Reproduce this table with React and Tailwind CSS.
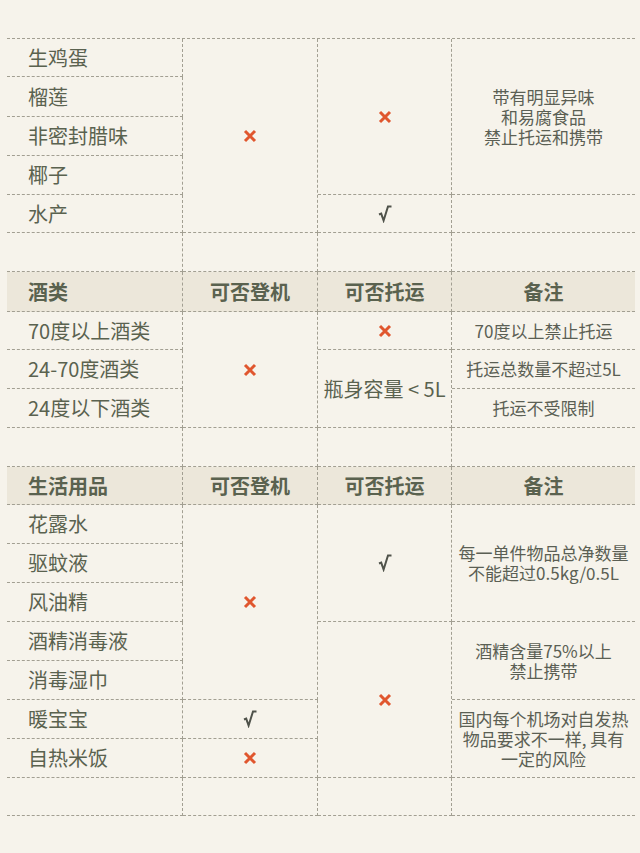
import React from "react";

const L = "border-[#a29f92] border-dashed";

function X() {
  return (
    <svg width="14" height="14" viewBox="0 0 14 14">
      <path d="M2 2 L12 12 M12 2 L2 12" stroke="#e0562e" strokeWidth="3" strokeLinecap="butt" />
    </svg>
  );
}

function Check() {
  return (
    <svg width="14" height="18" viewBox="0 0 14 18">
      <path
        d="M1 9.5 L3.2 8.6 L5.6 15.5 L10 1.5 L13.5 1.5"
        stroke="#4f524a"
        strokeWidth="2"
        fill="none"
        strokeLinejoin="miter"
      />
    </svg>
  );
}

export default function App() {
  const item = `flex items-center pl-[21px] text-[20px] text-[#5a624f] border-b border-r ${L}`;
  const mid = `flex items-center justify-center border-b border-r ${L}`;
  const rem = `flex items-center justify-center text-center text-[17px] leading-[20px] text-[#5b5f54] border-b ${L}`;
  const blankR = `border-b border-r ${L}`;
  const blank = `border-b ${L}`;
  const headL = `flex items-center pl-[21px] text-[20px] font-bold text-[#5a624f] bg-[#ece7da] border-b border-r ${L}`;
  const headC = `flex items-center justify-center text-[20px] font-bold text-[#5a624f] bg-[#ece7da] border-b border-r ${L}`;
  const headE = `flex items-center justify-center text-[20px] font-bold text-[#5a624f] bg-[#ece7da] border-b ${L}`;

  return (
    <div
      className="w-[640px] h-[853px] bg-[#f6f3eb] pt-[38px] overflow-hidden"
      style={{ fontFamily: '"Noto Sans CJK SC", "Noto Sans", sans-serif' }}
    >
      {/* Section 1 */}
      <div className={`ml-[7px] w-[628px] grid grid-cols-[176px_135px_134px_183px] grid-rows-[38px_40px_39px_39px_38px_39px] border-t ${L}`}>
        <div className={`${item} col-start-1 row-start-1`}>生鸡蛋</div>
        <div className={`${item} col-start-1 row-start-2`}>榴莲</div>
        <div className={`${item} col-start-1 row-start-3`}>非密封腊味</div>
        <div className={`${item} col-start-1 row-start-4`}>椰子</div>
        <div className={`${item} col-start-1 row-start-5`}>水产</div>
        <div className={`${blankR} col-start-1 row-start-6`}></div>

        <div className={`${mid} col-start-2 row-start-1 row-span-5`}><X /></div>
        <div className={`${blankR} col-start-2 row-start-6`}></div>

        <div className={`${mid} col-start-3 row-start-1 row-span-4`}><X /></div>
        <div className={`${mid} col-start-3 row-start-5`}><Check /></div>
        <div className={`${blankR} col-start-3 row-start-6`}></div>

        <div className={`${rem} col-start-4 row-start-1 row-span-4`}>
          带有明显异味<br />和易腐食品<br />禁止托运和携带
        </div>
        <div className={`${blank} col-start-4 row-start-5`}></div>
        <div className={`${blank} col-start-4 row-start-6`}></div>
      </div>

      {/* Section 2 */}
      <div className="ml-[7px] w-[628px] grid grid-cols-[176px_135px_134px_183px] grid-rows-[40px_38px_39px_39px_39px]">
        <div className={`${headL} col-start-1 row-start-1`}>酒类</div>
        <div className={`${headC} col-start-2 row-start-1`}>可否登机</div>
        <div className={`${headC} col-start-3 row-start-1`}>可否托运</div>
        <div className={`${headE} col-start-4 row-start-1`}>备注</div>

        <div className={`${item} col-start-1 row-start-2`}>70度以上酒类</div>
        <div className={`${item} col-start-1 row-start-3`}>24-70度酒类</div>
        <div className={`${item} col-start-1 row-start-4`}>24度以下酒类</div>
        <div className={`${blankR} col-start-1 row-start-5`}></div>

        <div className={`${mid} col-start-2 row-start-2 row-span-3`}><X /></div>
        <div className={`${blankR} col-start-2 row-start-5`}></div>

        <div className={`${mid} col-start-3 row-start-2`}><X /></div>
        <div className={`${mid} col-start-3 row-start-3 row-span-2 text-[20px] text-[#5a624f] whitespace-nowrap`}>瓶身容量 &lt; 5L</div>
        <div className={`${blankR} col-start-3 row-start-5`}></div>

        <div className={`${rem} col-start-4 row-start-2`}>70度以上禁止托运</div>
        <div className={`${rem} col-start-4 row-start-3`}>托运总数量不超过5L</div>
        <div className={`${rem} col-start-4 row-start-4`}>托运不受限制</div>
        <div className={`${blank} col-start-4 row-start-5`}></div>
      </div>

      {/* Section 3 */}
      <div className="ml-[7px] w-[628px] grid grid-cols-[176px_135px_134px_183px] grid-rows-[38px_39px_39px_39px_39px_39px_39px_39px_38px]">
        <div className={`${headL} col-start-1 row-start-1`}>生活用品</div>
        <div className={`${headC} col-start-2 row-start-1`}>可否登机</div>
        <div className={`${headC} col-start-3 row-start-1`}>可否托运</div>
        <div className={`${headE} col-start-4 row-start-1`}>备注</div>

        <div className={`${item} col-start-1 row-start-2`}>花露水</div>
        <div className={`${item} col-start-1 row-start-3`}>驱蚊液</div>
        <div className={`${item} col-start-1 row-start-4`}>风油精</div>
        <div className={`${item} col-start-1 row-start-5`}>酒精消毒液</div>
        <div className={`${item} col-start-1 row-start-6`}>消毒湿巾</div>
        <div className={`${item} col-start-1 row-start-7`}>暖宝宝</div>
        <div className={`${item} col-start-1 row-start-8`}>自热米饭</div>
        <div className={`${blankR} col-start-1 row-start-9`}></div>

        <div className={`${mid} col-start-2 row-start-2 row-span-5`}><X /></div>
        <div className={`${mid} col-start-2 row-start-7`}><Check /></div>
        <div className={`${mid} col-start-2 row-start-8`}><X /></div>
        <div className={`${blankR} col-start-2 row-start-9`}></div>

        <div className={`${mid} col-start-3 row-start-2 row-span-3`}><Check /></div>
        <div className={`${mid} col-start-3 row-start-5 row-span-4`}><X /></div>
        <div className={`${blankR} col-start-3 row-start-9`}></div>

        <div className={`${rem} col-start-4 row-start-2 row-span-3`}>
          每一单件物品总净数量<br />不能超过0.5kg/0.5L
        </div>
        <div className={`${rem} col-start-4 row-start-5 row-span-2`}>
          酒精含量75%以上<br />禁止携带
        </div>
        <div className={`${rem} col-start-4 row-start-7 row-span-2`}>
          国内每个机场对自发热<br />物品要求不一样, 具有<br />一定的风险
        </div>
        <div className={`${blank} col-start-4 row-start-9`}></div>
      </div>
    </div>
  );
}
